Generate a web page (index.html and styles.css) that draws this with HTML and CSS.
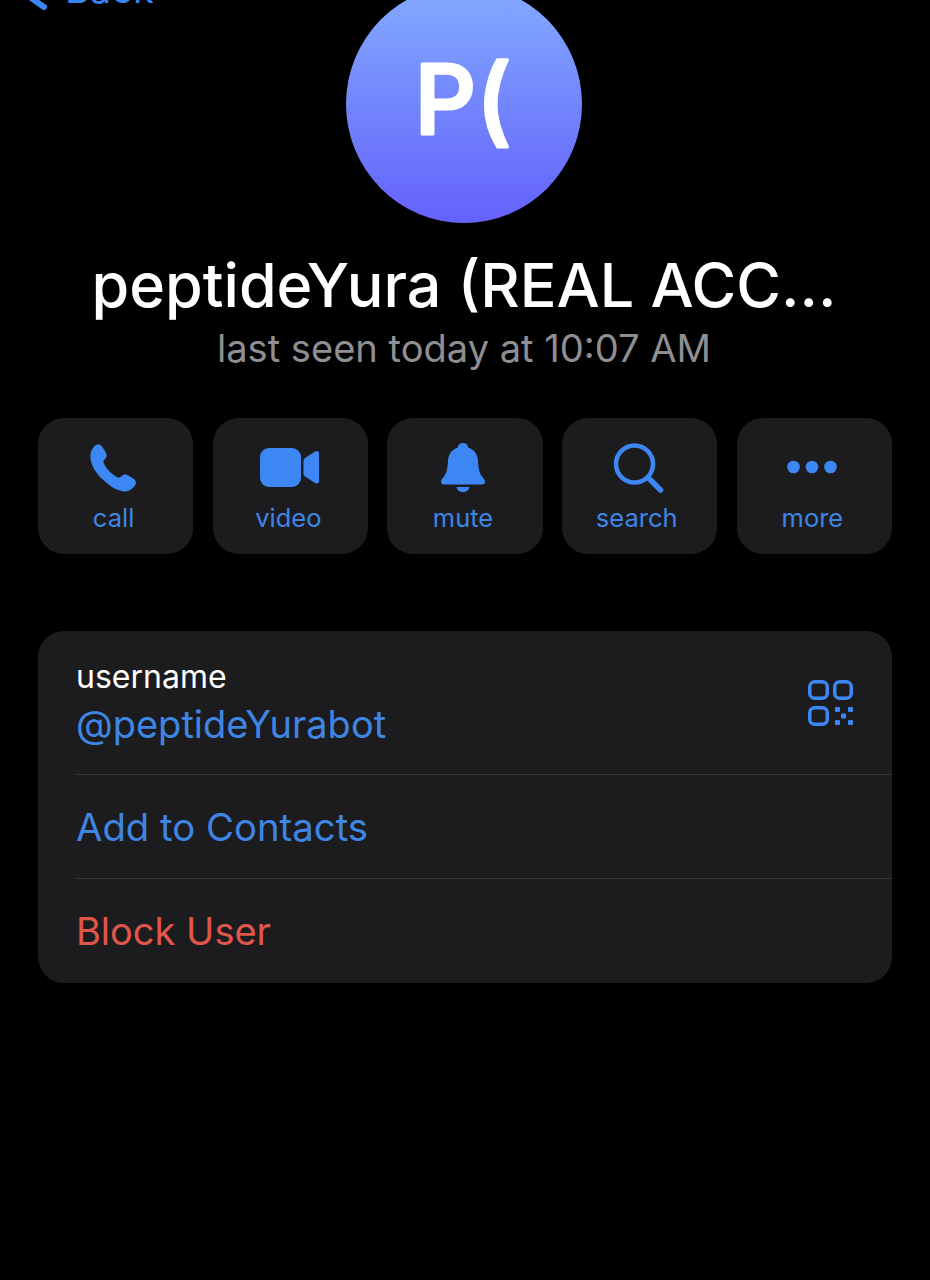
FILE: index.html
```html
<!DOCTYPE html>
<html lang="en">
<head>
    <meta charset="UTF-8">
    <meta name="viewport" content="width=device-width, initial-scale=1.0">
    <title>peptideYura</title>
    <link rel="stylesheet" href="styles.css">
</head>
<body>
    <div class="page">
        <a class="back-link">
            <svg class="back-chevron" width="24" height="52" viewBox="0 0 24 52"><path d="M20 40 L0 26 L20 12" fill="none" stroke="#3a85f0" stroke-width="6" stroke-linecap="round" stroke-linejoin="round"/></svg>
            <span>Back</span>
        </a>

        <header class="profile">
            <div class="avatar">
                <svg class="avatar-text" width="236" height="238" viewBox="0 0 236 238">
                    <text x="117" y="149" text-anchor="middle">P<tspan dy="4">(</tspan></text>
                </svg>
            </div>
            <h1 class="profile-name">peptideYura (REAL ACC…</h1>
            <p class="profile-status">last seen today at 10:07 AM</p>
        </header>

        <nav class="actions">
            <button class="action-btn">
                <svg class="action-icon" width="56" height="56" viewBox="0 0 52 52"><path fill="#3d87f5" d="M8.2 6.2c1.8-1.4 4.600-1.500 6.200.3 1.600 1.900 4 5.600 4.600 7.600.5 1.900-.2 3.200-1.400 4.500-1 1-1.700 1.800-1.300 3.200 1 2.800 3.600 6.400 6 8.900 2.500 2.400 5 4.200 7.500 5.100 1.200.4 2.200-.3 3.200-1.400 1.300-1.300 2.700-1.900 4.600-1.300 2 .7 5.500 2.700 7.200 4.200 1.900 1.700 2 4.300.5 6.200-2.300 2.900-5.500 5.400-9.800 5.200-6.400-.3-13.500-4.900-19.300-10.600C10.100 33.200 4.700 24.700 4.100 17.800c-.4-5 1.300-8.800 4.100-11.600z"/></svg>
                <span>call</span>
            </button>
            <button class="action-btn">
                <svg class="action-icon action-icon-video" width="60" height="56" viewBox="0 0 60 56"><rect x="0" y="9" width="41" height="39" rx="9" fill="#3d87f5"/><path fill="#3d87f5" d="M43.500 22c0-1.500.6-2 1.500-3l10-6.500c1.800-1 4-.5 4 1.700v28c0 2.200-2.200 2.700-4 1.700l-10-6.500c-.9-1-1.500-1.500-1.500-3z"/></svg>
                <span>video</span>
            </button>
            <button class="action-btn">
                <svg class="action-icon" width="56" height="56" viewBox="0 0 56 56"><path fill="#3d87f5" d="M28 4c3 0 5 2 5.400 4.800C39.500 10.600 42.500 15.500 43 22c.5 7 1 11.500 4 15.500 1.300 1.700 3 3.200 3 5.500 0 1.400-1 2.500-2.600 2.500H8.600C7 45.500 6 44.400 6 43c0-2.300 1.700-3.800 3-5.500 3-4 3.500-8.500 4-15.500.5-6.500 3.500-11.400 9.600-13.200C23 6 25 4 28 4z"/><path fill="#3d87f5" d="M21.500 48h13c-.5 3-3 5-6.500 5s-6-2-6.500-5z"/></svg>
                <span>mute</span>
            </button>
            <button class="action-btn">
                <svg class="action-icon" width="56" height="56" viewBox="0 0 56 56"><circle cx="24.500" cy="25" r="18.500" fill="none" stroke="#3d87f5" stroke-width="4.500"/><path d="M38.500 39 L50.500 51" fill="none" stroke="#3d87f5" stroke-width="5.500" stroke-linecap="round"/></svg>
                <span class="action-label-search">search</span>
            </button>
            <button class="action-btn">
                <svg class="action-icon" width="56" height="56" viewBox="0 0 56 56"><circle cx="9.500" cy="28" r="6.300" fill="#3d87f5"/><circle cx="28" cy="28" r="6.300" fill="#3d87f5"/><circle cx="46.500" cy="28" r="6.300" fill="#3d87f5"/></svg>
                <span>more</span>
            </button>
        </nav>

        <section class="info-card">
            <div class="info-row info-row-username">
                <div class="info-text">
                    <div class="info-label">username</div>
                    <div class="info-value">@peptideYurabot</div>
                </div>
                <svg class="qr-icon" width="46" height="46" viewBox="0 0 46 46">
                    <rect x="1.750" y="1.750" width="17.500" height="16.500" rx="5" fill="none" stroke="#3d87f5" stroke-width="3.500"/>
                    <rect x="26.750" y="1.750" width="16.500" height="16.500" rx="5" fill="none" stroke="#3d87f5" stroke-width="3.500"/>
                    <rect x="1.750" y="27.750" width="17.500" height="16.500" rx="5" fill="none" stroke="#3d87f5" stroke-width="3.500"/>
                    <rect x="27" y="27" width="5" height="5" rx="1" fill="#3d87f5"/>
                    <rect x="40" y="27" width="5" height="5" rx="1" fill="#3d87f5"/>
                    <rect x="33" y="33.500" width="5" height="5" rx="1" fill="#3d87f5"/>
                    <rect x="27" y="40" width="5" height="5" rx="1" fill="#3d87f5"/>
                    <rect x="40" y="40" width="5" height="5" rx="1" fill="#3d87f5"/>
                </svg>
            </div>
            <div class="info-row info-row-action">Add to Contacts</div>
            <div class="info-row info-row-action info-row-danger">Block User</div>
        </section>
    </div>
</body>
</html>
```

FILE: styles.css
```css
* {
    box-sizing: border-box;
}

html,
body {
    height: 1280px;
    overflow: hidden;
}

body {
    margin: 0;
    background: #000;
    font-family: Inter, "Noto Sans", sans-serif;
    color: #fff;
}

.page {
    display: flow-root;
    position: relative;
    height: 1280px;
    padding: 0 38px;
}

.back-link {
    position: absolute;
    top: -33px;
    left: 24px;
    display: flex;
    align-items: flex-start;
    gap: 17px;
    font-size: 38px;
    line-height: 44px;
    color: #3a85f0;
}

.profile {
    display: flex;
    flex-direction: column;
    align-items: center;
    margin-top: -15px;
    padding-right: 2px;
}

.avatar {
    width: 236px;
    height: 238px;
    border-radius: 50%;
    background: linear-gradient(180deg, #82abff 0%, #6461fb 100%);
}

.avatar-text {
    display: block;
}

.avatar-text text {
    font-family: Inter, sans-serif;
    font-size: 96px;
    font-weight: 500;
    fill: #fff;
    stroke: #fff;
    stroke-width: 3px;
    stroke-linejoin: round;
}

.profile-name {
    margin: 28px 0 0;
    font-size: 61px;
    line-height: 68px;
    font-weight: 500;
    white-space: nowrap;
}

.profile-status {
    margin: 6px 0 0;
    font-size: 38.100px;
    line-height: 46px;
    color: #8e8e93;
    white-space: nowrap;
}

.actions {
    display: grid;
    grid-template-columns: repeat(5, 1fr);
    gap: 19.500px;
    margin-top: 47px;
}

.action-btn {
    display: flex;
    flex-direction: column;
    align-items: center;
    height: 136px;
    padding: 21px 4px 0 0;
    border: none;
    border-radius: 26px;
    background: #1c1c1e;
    color: #3f85e4;
    font-family: inherit;
    font-size: 25.500px;
    line-height: 32px;
}

.action-icon {
    display: block;
    margin-bottom: 7px;
}

.action-icon-video {
    margin-left: 4px;
}

.action-label-search {
    margin-right: 2px;
}

.info-card {
    margin-top: 77px;
    padding-bottom: 1px;
    border-radius: 26px;
    background: #1c1c1e;
    overflow: hidden;
}

.info-row {
    display: flex;
    align-items: center;
    margin-left: 38px;
    font-size: 38.300px;
    color: #3f85e4;
}

.info-row + .info-row {
    border-top: 1px solid #38383a;
}

.info-row-username {
    justify-content: space-between;
    height: 143px;
    padding-right: 38px;
}

.info-row-action {
    height: 104px;
}

.info-row-danger {
    font-size: 38px;
    color: #e0564a;
}

.info-label {
    padding-top: 2px;
    font-size: 32px;
    line-height: 38px;
    color: #fff;
}

.info-value {
    margin-top: 2px;
    font-size: 38px;
    line-height: 52px;
}
```
